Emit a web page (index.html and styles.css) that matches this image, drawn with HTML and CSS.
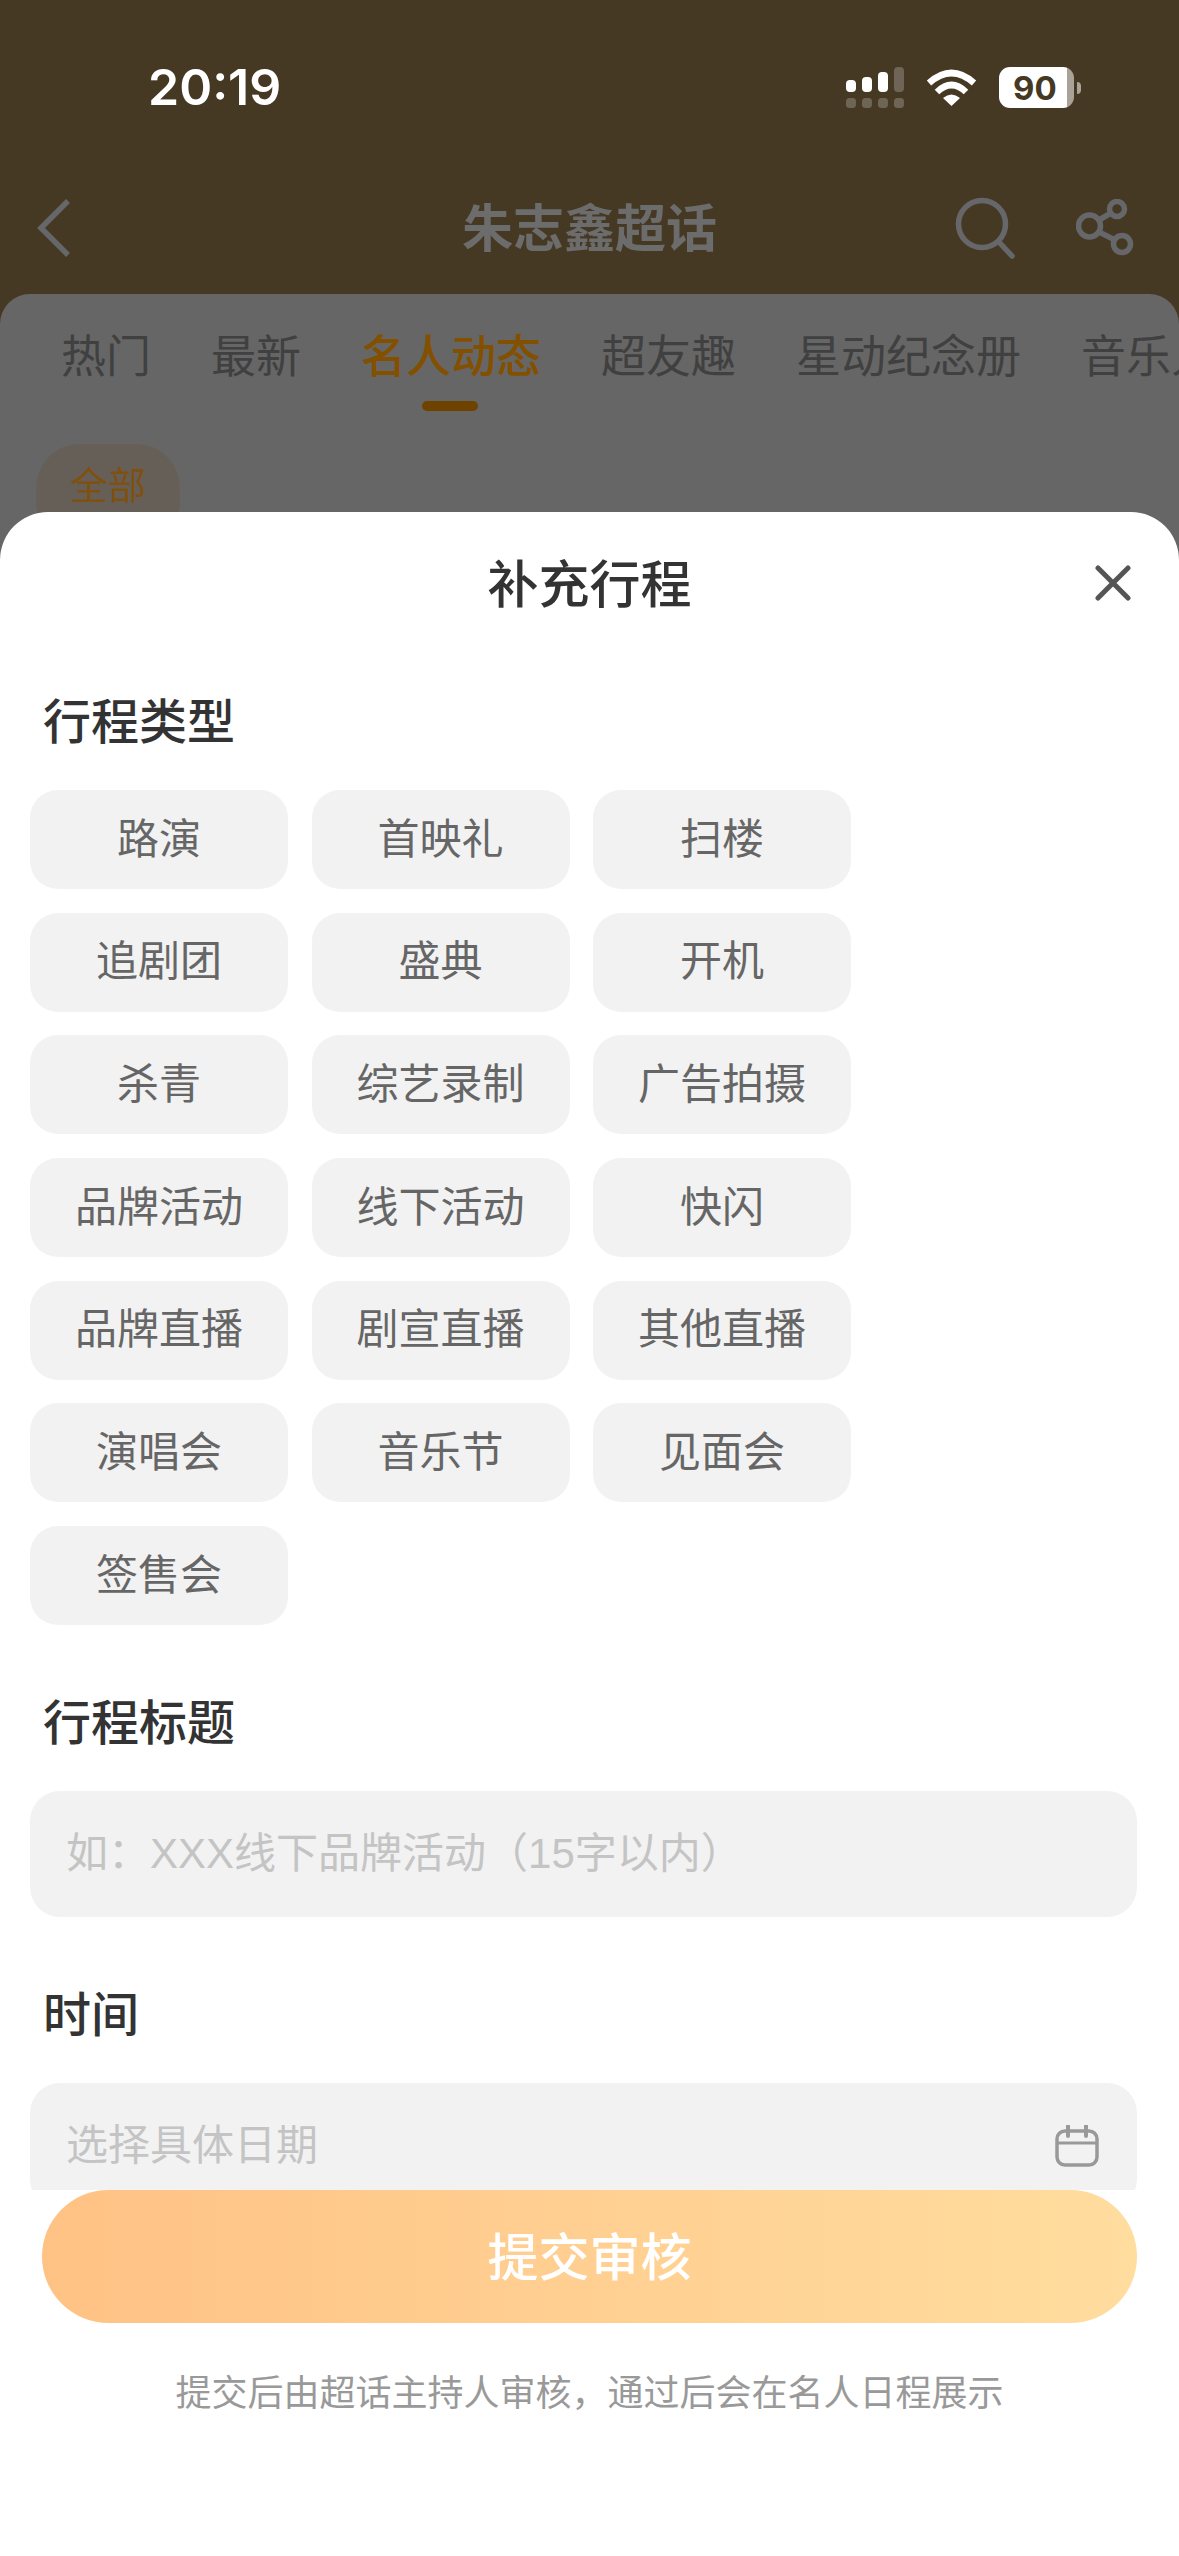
FILE: index.html
```html
<!DOCTYPE html>
<html lang="zh">
	<head>
		<meta charset="utf-8" />
		<title>补充行程</title>
		<link rel="stylesheet" href="styles.css">
	</head>
	<body>
		<div class="page">
			<!-- 状态栏 -->
			<div class="status">
				<span class="time">20:19</span>
				<div class="status-icons">
					<svg class="signal" width="58" height="41" viewBox="0 0 58 41">
						<rect x="0" y="13" width="10" height="12" rx="4" fill="#fff"/>
						<rect x="16" y="10" width="10" height="15" rx="4" fill="#fff"/>
						<rect x="32" y="5" width="10" height="20" rx="4" fill="#fff"/>
						<rect x="48" y="0" width="10" height="25" rx="4" fill="#6f6556"/>
						<rect x="0" y="31" width="10" height="10" rx="3.500" fill="#6f6556"/>
						<rect x="16" y="31" width="10" height="10" rx="3.500" fill="#6f6556"/>
						<rect x="32" y="31" width="10" height="10" rx="3.500" fill="#6f6556"/>
						<rect x="48" y="31" width="10" height="10" rx="3.500" fill="#6f6556"/>
					</svg>
					<svg class="wifi" width="51" height="37" viewBox="0 0 51 37">
						<path d="M3 14Q25.500-6 48 14" fill="none" stroke="#fff" stroke-width="6.500"/>
						<path d="M11 23Q25.500 9 40 23" fill="none" stroke="#fff" stroke-width="6.500"/>
						<path d="M25.500 37L17 29Q25.500 22 34 29Z" fill="#fff"/>
					</svg>
					<div class="battery">
						<div class="battery-body"><span>90</span></div>
						<div class="battery-nub"></div>
					</div>
				</div>
			</div>

			<!-- 导航 -->
			<div class="nav">
				<svg class="back" width="36" height="60" viewBox="0 0 36 60">
					<path d="M32 3L5 30L32 57" fill="none" stroke="#66676a" stroke-width="5.500"/>
				</svg>
				<h1 class="nav-title">朱志鑫超话</h1>
				<svg class="search" width="62" height="62" viewBox="0 0 62 62">
					<circle cx="27" cy="27" r="23.500" fill="none" stroke="#66676a" stroke-width="5.500"/>
					<path d="M44 45L57 59" fill="none" stroke="#66676a" stroke-width="5.500" stroke-linecap="round"/>
				</svg>
				<svg class="share" width="58" height="58" viewBox="0 0 58 58">
					<g fill="none" stroke="#66676a" stroke-width="5.500">
						<circle cx="13.500" cy="27" r="11"/>
						<circle cx="41" cy="10" r="7.500"/>
						<circle cx="46" cy="45" r="8.500"/>
						<path d="M23 21L35 14M23 33L39 41"/>
					</g>
				</svg>
			</div>

			<!-- 页面内容 -->
			<div class="panel">
				<div class="tabs">
					<span class="tab">热门</span>
					<span class="tab">最新</span>
					<span class="tab tab-on">名人动态</span>
					<span class="tab">超友趣</span>
					<span class="tab">星动纪念册</span>
					<span class="tab">音乐人</span>
				</div>
				<div class="filter">全部</div>
			</div>

			<!-- 弹层 -->
			<div class="sheet">
				<div class="sheet-head">
					<h2 class="sheet-title">补充行程</h2>
					<svg class="close" width="36" height="36" viewBox="0 0 36 36">
						<path d="M3 3L33 33M33 3L3 33" fill="none" stroke="#555" stroke-width="5" stroke-linecap="round"/>
					</svg>
				</div>
				<div class="form">
					<h3 class="label">行程类型</h3>
					<div class="chips">
						<div class="chip">路演</div>
						<div class="chip">首映礼</div>
						<div class="chip">扫楼</div>
						<div class="chip">追剧团</div>
						<div class="chip">盛典</div>
						<div class="chip">开机</div>
						<div class="chip">杀青</div>
						<div class="chip">综艺录制</div>
						<div class="chip">广告拍摄</div>
						<div class="chip">品牌活动</div>
						<div class="chip">线下活动</div>
						<div class="chip">快闪</div>
						<div class="chip">品牌直播</div>
						<div class="chip">剧宣直播</div>
						<div class="chip">其他直播</div>
						<div class="chip">演唱会</div>
						<div class="chip">音乐节</div>
						<div class="chip">见面会</div>
						<div class="chip">签售会</div>
					</div>
					<h3 class="label label-gap">行程标题</h3>
					<div class="field">如：XXX线下品牌活动（15字以内）</div>
					<h3 class="label label-gap">时间</h3>
					<div class="field field-date">
						<span>选择具体日期</span>
						<svg width="44" height="42" viewBox="0 0 44 42">
							<rect x="2" y="6" width="40" height="34" rx="8" fill="none" stroke="#999" stroke-width="3.500"/>
							<path d="M2 18H42" stroke="#999" stroke-width="3"/>
							<path d="M13 1V11M31 1V11" stroke="#999" stroke-width="4" stroke-linecap="round"/>
						</svg>
					</div>
				</div>
				<div class="foot">
					<button class="submit">提交审核</button>
					<p class="note">提交后由超话主持人审核，通过后会在名人日程展示</p>
				</div>
			</div>
		</div>
	</body>
</html>
```

FILE: styles.css
```css
* {
	padding: 0;
	margin: 0;
	box-sizing: border-box;
}

body {
	width: 1179px;
	height: 2556px;
	overflow: hidden;
	background: #463924;
	font-family: "Liberation Sans", "Noto Sans CJK SC", sans-serif;
}

.page {
	position: relative;
	height: 2556px;
	overflow: hidden;
}

h1, h2, h3 {
	font-weight: 500;
}

/* 状态栏 */
.status {
	height: 172px;
	padding: 67px 98px 0 148px;
	display: flex;
	justify-content: space-between;
	align-items: flex-start;
}

.time {
	margin-top: -2px;
	font-family: Inter, "Liberation Sans", sans-serif;
	font-size: 50px;
	line-height: 44px;
	font-weight: 600;
	color: #fff;
}

.status-icons {
	display: flex;
	align-items: flex-start;
}

.signal {
	margin-right: 22px;
}

.wifi {
	margin: 2px 22px 0 0;
}

.battery {
	display: flex;
	align-items: center;
}

.battery-body {
	width: 75px;
	height: 41px;
	border-radius: 11px;
	background: linear-gradient(to right, #fff 91%, #a9a297 91%);
	display: flex;
	align-items: center;
	padding-left: 14px;
}

.battery-body span {
	font-family: Inter, "Liberation Sans", sans-serif;
	font-size: 33px;
	font-weight: 700;
	color: #463924;
}

.battery-nub {
	width: 4px;
	height: 12px;
	margin-left: 3px;
	border-radius: 0 6px 6px 0;
	background: #a9a297;
}

/* 导航 */
.nav {
	height: 122px;
	padding: 0 45px 10px 36px;
	display: flex;
	align-items: center;
	position: relative;
}

.nav-title {
	font-size: 51px;
	line-height: 64px;
	color: #6c6c6c;
	font-weight: 700;
	position: absolute;
	left: 0;
	right: 0;
	top: 26px;
	text-align: center;
}

.search {
	margin-left: auto;
}

.share {
	margin-left: 59px;
}

/* 页面内容 */
.panel {
	height: 400px;
	border-radius: 30px 30px 0 0;
	background: #666;
	overflow: hidden;
}

.tabs {
	height: 120px;
	padding: 33px 0 0 61px;
	display: flex;
	gap: 60px;
	white-space: nowrap;
}

.tab {
	position: relative;
	font-size: 45px;
	line-height: 62px;
	color: #404040;
}

.tab-on {
	font-weight: 500;
	color: #835000;
}

.tab-on::after {
	content: "";
	position: absolute;
	left: 61px;
	top: 74px;
	width: 56px;
	height: 10px;
	border-radius: 5px;
	background: #6e4300;
}

.filter {
	width: 144px;
	height: 100px;
	margin: 30px 0 0 36px;
	padding-top: 17px;
	border-radius: 44px;
	background: #665f58;
	text-align: center;
	font-size: 38px;
	line-height: 50px;
	color: #7f5010;
}

/* 弹层 */
.sheet {
	position: absolute;
	left: 0;
	right: 0;
	top: 512px;
	bottom: 0;
	border-radius: 48px 48px 0 0;
	background: #fff;
	display: flex;
	flex-direction: column;
}

.sheet-head {
	position: relative;
	height: 177px;
	padding-top: 42px;
	flex-shrink: 0;
}

.sheet-title {
	font-size: 51px;
	line-height: 64px;
	text-align: center;
	color: #333;
}

.close {
	position: absolute;
	right: 48px;
	top: 53px;
}

.form {
	height: 1501px;
	padding: 0 42px 0 30px;
	overflow: hidden;
	flex-shrink: 0;
}

.label {
	font-size: 48px;
	line-height: 68px;
	padding-left: 13px;
	margin-bottom: 33px;
	color: #333;
}

.label-gap {
	margin-top: 65px;
	margin-bottom: 33px;
}

.chips {
	display: grid;
	grid-template-columns: repeat(3, 258px);
	grid-auto-rows: 99px;
	gap: 23.700px 23.500px;
}

.chip {
	border-radius: 28px;
	background: #f2f2f2;
	display: flex;
	align-items: center;
	justify-content: center;
	font-size: 42px;
	line-height: 56px;
	color: #666;
}

.field {
	height: 126px;
	padding: 0 36px;
	border-radius: 30px;
	background: #f2f2f2;
	display: flex;
	align-items: center;
	font-size: 42px;
	line-height: 56px;
	color: #c4c4c4;
}

.field-date {
	justify-content: space-between;
	padding-right: 38px;
}

/* 底部 */
.foot {
	padding: 0 42px;
}

.submit {
	display: block;
	width: 100%;
	height: 133px;
	padding-top: 5px;
	border: none;
	border-radius: 67px;
	background: linear-gradient(to right, #ffc285, #ffdd9e);
	font-family: inherit;
	font-size: 51px;
	line-height: 64px;
	font-weight: 500;
	color: #fff;
}

.note {
	margin-top: 45px;
	text-align: center;
	font-size: 36px;
	line-height: 52px;
	color: #999;
}
```
